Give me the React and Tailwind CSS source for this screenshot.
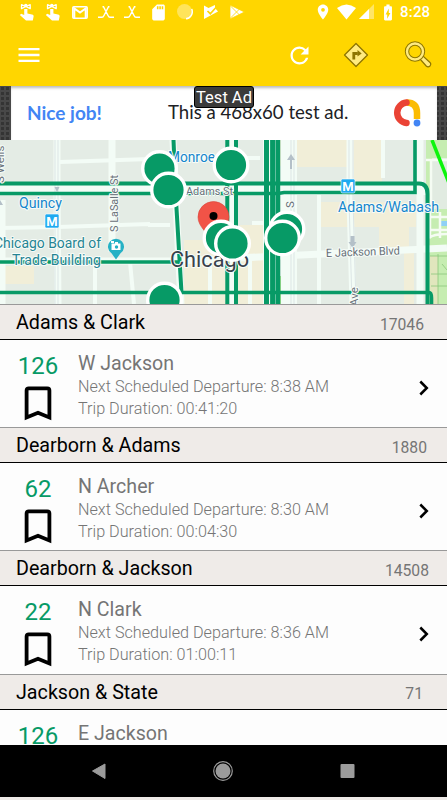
import React from 'react';
import { MdMenu, MdRefresh, MdLocationOn, MdSdCard, MdBatteryChargingFull } from 'react-icons/md';

const stations = [
    { name: 'Adams & Clark', stopId: '17046', pad: 'pr-[23px]', route: '126', headsign: 'W Jackson', departure: '8:38 AM', duration: '00:41:20' },
    { name: 'Dearborn & Adams', stopId: '1880', pad: 'pr-5', route: '62', headsign: 'N Archer', departure: '8:30 AM', duration: '00:04:30' },
    { name: 'Dearborn & Jackson', stopId: '14508', pad: 'pr-[18px]', route: '22', headsign: 'N Clark', departure: '8:36 AM', duration: '01:00:11' },
    { name: 'Jackson & State', stopId: '71', pad: 'pr-6', route: '126', headsign: 'E Jackson' },
];

const stops = [
    [159.5, 28.5], [168.5, 50], [231, 25], [221, 98], [232.5, 103.5], [287, 89], [282.5, 98], [164.5, 160],
];

const ReminderIcon = () => (
    <svg width="16" height="18" viewBox="0 0 16 18" fill="white">
        <path d="M5.200 6h3.200v4.500l4.600 1.100c1.200.3 1.800 1 1.600 2L13.800 17.500H7L.8 12l1.400-1.300 3 1.300z" />
        <path d="M6.800 3.500L2.500 1.700v4zM6.800 3.500L11.200 1.700v4z" fill="none" stroke="white" strokeWidth="1.3" strokeLinejoin="round" />
        <circle cx="6.800" cy="2.500" r="1.800" />
    </svg>
);

const GmailIcon = () => (
    <svg width="16" height="13" viewBox="0 0 16 13" fill="none">
        <rect x=".8" y=".8" width="14.4" height="11.4" rx="1" stroke="white" strokeWidth="1.5" />
        <path d="M2.300 12V2.400L8 6.600l5.700-4.200V12" stroke="white" strokeWidth="2" />
    </svg>
);

const CrossIcon = () => (
    <svg width="16" height="13" viewBox="0 0 16 13" fill="none" stroke="white" strokeWidth="1.4">
        <path d="M4.500.7h1L10 9.500q.8 1.800 2 1.800h4M11.500.7h-1L6 9.500q-.8 1.800-2 1.800H0" />
    </svg>
);

const BookmarkIcon = () => (
    <svg width="28" height="36" viewBox="0 0 28 36" fill="none" stroke="black" strokeWidth="3.800" strokeLinejoin="miter" className="shrink-0">
        <path d="M2.600 31.500V4.500Q2.600 2.400 4.700 2.400H23.300Q25.400 2.400 25.400 4.500V31.500L14 26.800z" />
    </svg>
);

const StatusBar = () => (
    <div className="h-6 flex items-center text-white">
        <div className="flex items-center pl-[19px] w-[314px]">
            <div className="w-[26px]"><ReminderIcon /></div>
            <div className="w-[27px]"><ReminderIcon /></div>
            <div className="w-[26px]"><GmailIcon /></div>
            <div className="w-[26px]"><CrossIcon /></div>
            <div className="w-[25px]"><CrossIcon /></div>
            <div className="w-[28px]"><MdSdCard className="w-[19px] h-[19px]" /></div>
            <div className="w-[27px]">
                <svg width="16" height="16" viewBox="0 0 16 16">
                    <circle cx="7.500" cy="7.500" r="7.500" fill="#ffe45a" />
                    <path d="M9 14.700A7 7 0 0 0 14.700 5" fill="none" stroke="white" strokeWidth="1.500" />
                </svg>
            </div>
            <div className="w-[26px]">
                <svg width="14" height="14" viewBox="0 0 14 14">
                    <path d="M0 .5L4.500 3 11 0v3l3 3.500L0 14z" fill="white" />
                    <path d="M3.500 6l2.800 2.700L11.500 3" fill="none" stroke="#ffd600" strokeWidth="1.700" />
                </svg>
            </div>
            <svg width="15" height="14" viewBox="0 0 15 14" stroke="#ffd600" strokeWidth=".8" className="shrink-0">
                <path d="M0 0l14.500 7L0 14z" fill="white" />
                <path d="M0 .5L10.500 11M0 13.500L10.500 3" fill="none" />
            </svg>
        </div>
        <MdLocationOn className="w-[18px] h-[18px]" />
        <svg width="38" height="16" viewBox="0 0 38 16" className="ml-[5px] mr-[4px]">
            <path d="M0 4Q9.500-3 19 4L9.500 15.500z" fill="white" />
            <path d="M37 0v15H22z" fill="#ffe566" />
            <path d="M32 5v10H22z" fill="white" />
        </svg>
        <MdBatteryChargingFull className="w-[20px] h-[19px] -ml-px" />
        <span className="ml-[2px] text-[15px] font-medium tracking-[0.2px]">8:28</span>
    </div>
);

const Toolbar = () => (
    <div className="h-[62px] flex items-center">
        <MdMenu className="w-[28px] h-[28px] text-white ml-[15px]" />
        <MdRefresh className="w-[27px] h-[27px] text-white ml-auto" />
        <svg width="26" height="26" viewBox="0 0 26 26" className="ml-[30px]">
            <path d="M13 1.500L24.500 13 13 24.500 1.500 13z" fill="#ffeb80" stroke="#8d7500" strokeWidth="1.300" strokeLinejoin="round" />
            <path d="M10.800 17.500v-6h4" fill="none" stroke="#8d7500" strokeWidth="2.800" />
            <path d="M14.500 8l4.200 3.400-4.200 3.200z" fill="#8d7500" />
        </svg>
        <svg width="28" height="28" viewBox="0 0 28 28" className="ml-[35px] mr-[15px]">
            <path d="M16 18l3-3 7 6.500q1.500 1.500 0 3.500-2 1.800-3.800 0z" fill="#ffeb80" stroke="#8d7500" strokeWidth="1.200" />
            <circle cx="11" cy="10.500" r="8" fill="none" stroke="#8d7500" strokeWidth="4.400" />
            <circle cx="11" cy="10.500" r="8" fill="none" stroke="#ffeb80" strokeWidth="2.400" />
        </svg>
    </div>
);

const AdBanner = () => (
    <div className="relative h-[54px] pl-[11px] pr-[10px] bg-[#484848] bg-[radial-gradient(#343434_1.500px,transparent_2px)] bg-[size:5px_5px]">
        <div className="h-full bg-white flex items-center font-[Lato,sans-serif] text-[18.6px] shadow-[inset_0_3px_3px_-1px_#bbb]">
            <span className="ml-4 w-[141px] text-[19px] font-bold text-[#4285f4]">Nice job!</span>
            <span className="whitespace-nowrap text-[#202124]">This a 468x60 test ad.</span>
            <svg width="30" height="30" viewBox="0 0 30 30" fill="none" strokeWidth="6.500" strokeLinecap="round" className="ml-auto mr-[15px]">
                <path d="M14.500 4.500Q25 4.500 25 15V21" stroke="#fbbc04" strokeLinecap="butt" />
                <path d="M14.500 4.500A10.300 10.300 0 0 0 14.500 25" stroke="#ea4335" />
                <circle cx="25" cy="25" r="3.400" fill="#4285f4" />
            </svg>
        </div>
        <div className="absolute top-0 left-[194px] w-[60px] h-[22px] rounded-[3px] border border-black bg-[#3b3b3b] text-white text-[16.5px] leading-[22px] text-center whitespace-nowrap">Test Ad</div>
    </div>
);

const Metro = ({ x, y }) => (
    <g>
        <rect x={x - 7} y={y - 7} width="14" height="14" rx="1.500" fill="#1eaaf1" stroke="white" strokeWidth=".6" />
        <text x={x} y={y + 4.700} fontSize="13" fontWeight="700" fill="white" textAnchor="middle">M</text>
    </g>
);

const StopMap = () => (
    <svg width="447" height="164" viewBox="0 0 447 164" className="block bg-[#e4ece5] font-[Roboto,sans-serif]">
        {/* blocks */}
        <g fill="#f1eed8">
            <path d="M5 126h29v18H5zM184 100h28v-15h54v79h-82zM297 0h57v27h-57zM354 0h28v43h-28zM320 62h96v25h-96zM379 87h30v21h-30zM404 108h10v56h-10zM270 0h27v26h-27z" />
        </g>
        <path d="M212 85h28v15h-28zM387 0h27v28h-27zM297 27h24v16h-24z" fill="#e4ece5" />
        {/* park */}
        <path d="M426 0h21v164h-21z" fill="#c6edb1" />
        <path d="M432 18h15v51h-15z" fill="#e1ebe1" />
        <path d="M441 81h6v5h-6z" fill="#8fd0f5" />
        <path d="M426 20h5M430 72v26M430 77h17M426 90h21M440 72v26M429 98q4-4 18-4M431 69V20h16" fill="none" stroke="#f5fcf3" strokeWidth="2.500" />
        <path d="M430 116h8v48h-8z" fill="#e1e6bd" />
        <path d="M438 114v50M431 134h16M431 146h16M442 124l5 6M430 116h17" fill="none" stroke="#8cc77b" strokeWidth=".8" />
        <path d="M280 136h6v28h-6z" fill="#a2dc8b" />
        {/* streets */}
        <g fill="none" stroke="#f3fcf6" strokeWidth="6">
            <path d="M0 49H426" strokeWidth="12" />
            <path d="M57 0v49L58 164M173 0L181 164M420 0V164" strokeWidth="7" />
            <path d="M112 0V112M2 60V164M232 0v164" strokeWidth="7" />
            <path d="M289 0v164" strokeWidth="16" />
            <path d="M0 121H175L447 108" strokeWidth="7" />
            <path d="M60 22L150 19M0 88l58-1L150 84M148 85h22M95 122v42M130 122l4 42M210 120v44M250 120v44M319 49v115M383 0v38M180 18h80M252 83h16" strokeWidth="4" />
            <path d="M350 0v60l3 104" strokeWidth="7" />
            <path d="M271 0v164" strokeWidth="16" />
        </g>
        <path d="M55 0v164M58 0v164M349 0v60l3 104M353 0v60l3 104M294 0v164M291 0v164" fill="none" stroke="#dce5e5" strokeWidth="1" />
        <path d="M54.500 47h5l-2.500 5zM350.500 96h4v6h2l-4 6-4-6h2zM0 60l3 5H0zM290 20v9h2v-9h3l-4-6-4 6z" fill="#b4c0c8" />
        {/* bus routes */}
        <g fill="none" stroke="#079a66" strokeWidth="4">
            <path d="M0 43.500H419Q427.500 43.500 427.500 54V164" />
            <path d="M0 53.500H278l6-1H415V0" strokeWidth="3.600" />
            <path d="M0 122H181M0 152.500H429Q431.500 152.500 431.500 158V164" strokeWidth="3.600" />
            <path d="M173.500 0L176 60 181.500 152.500M227.300 0V164M236 0V164" />
            <path d="M266.500 0V164" strokeWidth="5" />
            <path d="M272.800 0V164" strokeWidth="5.400" />
            <path d="M278 0V164" strokeWidth="4.400" />
        </g>
        <path d="M432 0L449 43" stroke="#0cf50c" strokeWidth="3.500" />
        {/* labels */}
        <g stroke="#f7fcf9" strokeWidth="2" paintOrder="stroke" strokeLinejoin="round">
            <g fill="#1485cc" fontSize="15">
                <text x="19" y="68" textLength="43" lengthAdjust="spacingAndGlyphs">Quincy</text>
                <text x="168" y="22" fontSize="14" textLength="47" lengthAdjust="spacingAndGlyphs">Monroe</text>
                <text x="338" y="72" textLength="101" lengthAdjust="spacingAndGlyphs">Adams/Wabash</text>
            </g>
            <g fill="#258493" fontSize="15">
                <text x="-6" y="108" textLength="107" lengthAdjust="spacingAndGlyphs">Chicago Board of</text>
                <text x="12" y="125" textLength="89" lengthAdjust="spacingAndGlyphs">Trade Building</text>
            </g>
            <g fill="#677078" fontSize="11.500">
                <text x="186" y="55" fontSize="11" textLength="47" lengthAdjust="spacingAndGlyphs">Adams St</text>
                <text x="326" y="117" textLength="74" lengthAdjust="spacingAndGlyphs" transform="rotate(-2 326 117)">E Jackson Blvd</text>
                <text transform="translate(118 92) rotate(-90)" textLength="57" lengthAdjust="spacingAndGlyphs">S LaSalle St</text>
                <text transform="translate(358 166) rotate(-90)">Ave</text>
                <text transform="translate(294 68) rotate(-90)">S</text>
                <text transform="translate(4 43) rotate(-90)">S Wells</text>
            </g>
            <text x="170" y="127" fontSize="22" fill="#39424c" textLength="79" lengthAdjust="spacingAndGlyphs">Chicago</text>
        </g>
        <Metro x={52} y={81} />
        <Metro x={348} y={46} />
        <path d="M116 119.500l-4.500-6.200a8 8 0 1 1 9 0z" fill="#25b1c5" />
        <path d="M111.500 103.500h9v6.500h-9zM111 101h3v2h-3zM115 102h3v2h-3z" fill="white" />
        <circle cx="116.500" cy="107" r="1.700" fill="#25b1c5" />
        {/* current position */}
        <path d="M198 77a15.500 15.500 0 0 1 31 0c0 10-10 15-15.500 28C208 92 198 87 198 77z" fill="#f15347" stroke="#d8443b" strokeWidth=".6" />
        <circle cx="213.500" cy="76" r="4" fill="black" />
        {stops.map(([x, y]) => (
            <circle key={`${x}-${y}`} cx={x} cy={y} r="16.800" fill="#079a66" stroke="white" strokeWidth="3.400" />
        ))}
    </svg>
);

const Station = ({ station }) => (
    <div className="h-[123.200px] shrink-0">
        <div className={`h-9 flex items-center justify-between pl-4 bg-[#efebe8] border-t border-t-[#999] border-b border-b-black ${station.pad}`}>
            <span className="text-[19.7px] leading-6 text-black pt-0.5">{station.name}</span>
            <span className="text-[15.700px] leading-6 text-[#757575] pt-[5px]">{station.stopId}</span>
        </div>
        <div className="h-[87px] flex items-center bg-[#fdfdfd]">
            <div className="w-[76px] self-stretch flex flex-col items-center pt-[12px]">
                <span className="text-[24px] leading-7 text-[#079a66]">{station.route}</span>
                <div className="mt-[6px]"><BookmarkIcon /></div>
            </div>
            <div className="ml-[2px] self-stretch pt-[11px] font-light text-[16.200px] leading-[22px] text-[#757575] whitespace-nowrap">
                <p className="text-[19.600px] leading-[25px] font-normal">{station.headsign}</p>
                {station.departure && <p>Next Scheduled Departure: {station.departure}</p>}
                {station.duration && <p>Trip Duration: {station.duration}</p>}
            </div>
            <svg width="10" height="16" viewBox="0 0 10 16" fill="none" stroke="black" strokeWidth="2.500" className="ml-auto mr-[18px] mt-[9px]">
                <path d="M1.300 1.500L7.800 8 1.300 14.500" />
            </svg>
        </div>
    </div>
);

const NavigationBar = () => (
    <div className="h-[52px] bg-black">
        <svg width="447" height="52" viewBox="0 0 447 52" fill="#9b9b9b">
            <path d="M92.500 26L105 19v14.500z" stroke="#9b9b9b" strokeLinejoin="round" />
            <circle cx="223" cy="26" r="7.500" />
            <circle cx="223" cy="26" r="9.300" fill="none" stroke="#9b9b9b" strokeWidth="1.200" />
            <rect x="340.500" y="19" width="14" height="14" rx="1" />
        </svg>
    </div>
);

const App = () => {
    return (
        <div className="w-[447px] h-[800px] overflow-hidden bg-[#efebe8] font-[Roboto,sans-serif]">
            <div className="bg-[#ffd600]">
                <StatusBar />
                <Toolbar />
            </div>
            <AdBanner />
            <StopMap />
            <div className="h-[441px] flex flex-col overflow-hidden bg-[#fdfdfd]">
                {stations.map((station) => (
                    <Station key={station.name} station={station} />
                ))}
            </div>
            <NavigationBar />
        </div>
    );
};

export default App;
